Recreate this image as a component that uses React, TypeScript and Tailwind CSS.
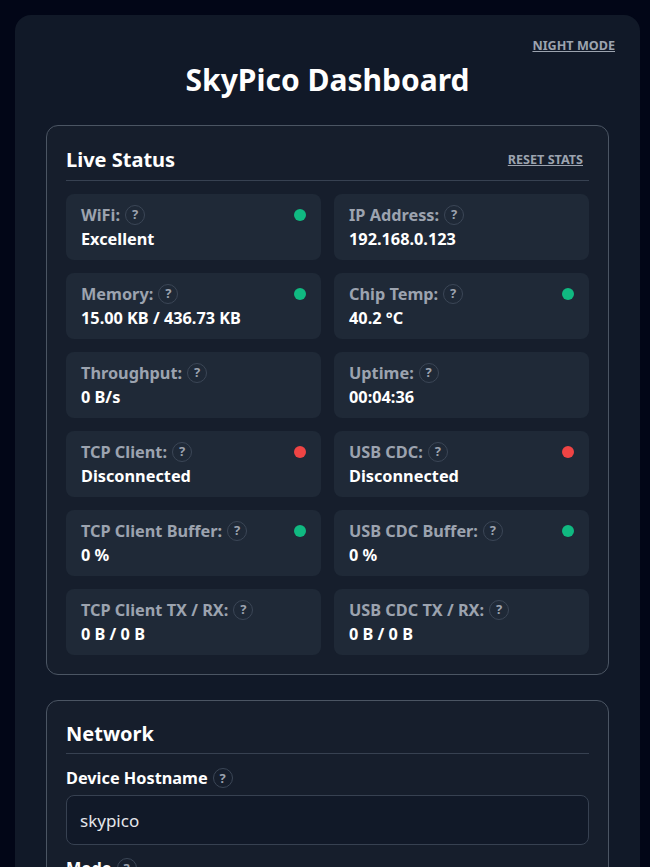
import React from 'react';

const Help = () => (
  <span className="inline-flex items-center justify-center w-5 h-5 ml-[5px] rounded-full border border-[#3b4656] text-[#9ca3af] text-[13px] font-bold shrink-0">?</span>
);

const Dot = ({ color }: { color: string }) => (
  <span className={`absolute top-[15px] right-[15px] w-3 h-3 rounded-full ${color}`} />
);

const STATS = [
  { label: 'WiFi:', value: 'Excellent', dot: 'bg-[#10b981]' },
  { label: 'IP Address:', value: '192.168.0.123' },
  { label: 'Memory:', value: '15.00 KB / 436.73 KB', dot: 'bg-[#10b981]' },
  { label: 'Chip Temp:', value: '40.2 °C', dot: 'bg-[#10b981]' },
  { label: 'Throughput:', value: '0 B/s' },
  { label: 'Uptime:', value: '00:04:36' },
  { label: 'TCP Client:', value: 'Disconnected', dot: 'bg-[#ef4444]' },
  { label: 'USB CDC:', value: 'Disconnected', dot: 'bg-[#ef4444]' },
  { label: 'TCP Client Buffer:', value: '0 %', dot: 'bg-[#10b981]' },
  { label: 'USB CDC Buffer:', value: '0 %', dot: 'bg-[#10b981]' },
  { label: 'TCP Client TX / RX:', value: '0 B / 0 B' },
  { label: 'USB CDC TX / RX:', value: '0 B / 0 B' },
];

export default function App() {
  return (
    <div className="h-[867px] overflow-hidden bg-[#020617] pt-[15px] pl-[15px] pr-[10px] font-['Noto_Sans',sans-serif] text-white">
      <div className="relative bg-[#111928] rounded-2xl px-[31px] pt-[47px] min-h-[900px]">
        {/* Night mode link */}
        <a className="absolute top-[22px] right-[25px] text-[12.6px] leading-[18px] font-bold text-[#9ca3af] underline">NIGHT MODE</a>
        <h1 className="text-[30px] leading-[36px] font-bold text-center">SkyPico Dashboard</h1>

        {/* Live status */}
        <section className="mt-[27px] h-[550px] bg-[#161e2c] border border-[#4b5563] rounded-xl px-[19px] pt-[19px]">
          <div className="flex items-center justify-between h-[36px] pb-[6px] border-b border-[#374151]">
            <h2 className="text-[20px] font-bold leading-[28px]">Live Status</h2>
            <a className="mr-[6px] mt-px text-[12.6px] leading-[18px] font-bold text-[#9ca3af] underline">RESET STATS</a>
          </div>
          <div className="grid grid-cols-2 gap-x-[13px] gap-y-[13px] mt-[13px]">
            {STATS.map((s) => (
              <div key={s.label} className="relative h-[66px] bg-[#1f2937] rounded-lg px-[15px] pt-[9px]">
                <div className="flex items-center h-[24px] text-[16.3px] font-bold text-[#9ca3af]">
                  {s.label}
                  <Help />
                </div>
                <div className="text-[16.3px] leading-[24px] font-bold">{s.value}</div>
                {s.dot && <Dot color={s.dot} />}
              </div>
            ))}
          </div>
        </section>

        {/* Network */}
        <section className="mt-[25px] bg-[#161e2c] border border-[#4b5563] rounded-xl px-[19px] pt-[19px] pb-5">
          <div className="h-[34px] border-b border-[#374151]">
            <h2 className="text-[20px] font-bold leading-[28px]">Network</h2>
          </div>
          <label className="flex items-center mt-[12px] text-[16.3px] font-bold leading-[24px]">
            Device Hostname
            <Help />
          </label>
          <input
            readOnly
            value="skypico"
            className="block w-full h-[50px] mt-[5px] px-[13px] bg-[#111928] border border-[#374151] rounded-lg text-[17px] text-[#e5e7eb] outline-none"
          />
          <label className="flex items-center mt-[11px] text-[16.3px] font-bold leading-[24px]">
            Mode
            <Help />
          </label>
        </section>
      </div>
    </div>
  );
}
